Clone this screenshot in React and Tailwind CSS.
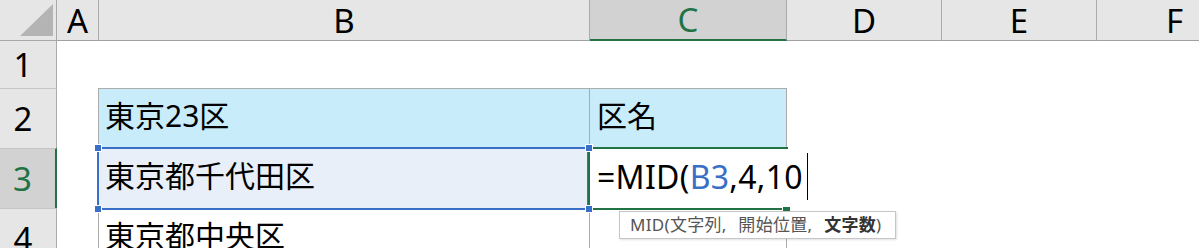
import React from "react";

const cols = [
  { key: "A", w: "w-[42px]" },
  { key: "B", w: "w-[491px]" },
  { key: "C", w: "w-[197px]", active: true },
  { key: "D", w: "w-[155px]" },
  { key: "E", w: "w-[155px]" },
  { key: "F", w: "w-[155px]" },
];

const cellFont = "font-['Noto_Sans','Noto_Sans_CJK_JP',sans-serif]";

function RowHead({ n, active, top = true, h }) {
  return (
    <div
      className={`${h} w-[57px] shrink-0 flex items-center justify-center pr-[10px] text-[33px] leading-none font-['Noto_Sans',sans-serif] ${
        top ? "border-t border-[#c4c4c4]" : ""
      } ${
        active
          ? "bg-[#d2d2d2] text-[#217346] border-r-2 border-r-[#217346]"
          : "bg-[#e6e6e6] text-black border-r border-r-[#ababab]"
      }`}
    >
      {n}
    </div>
  );
}

export default function App() {
  return (
    <div className="relative w-[1199px] h-[248px] overflow-hidden bg-white select-none">
      {/* column header */}
      <div className="flex h-[41px] bg-[#e6e6e6]">
        <div className="w-[57px] shrink-0 border-r border-b border-[#a8a8a8] flex">
          <svg width="56" height="40" viewBox="0 0 56 40">
            <polygon points="20,36 53,36 53,4" fill="#b4b4b4" />
          </svg>
        </div>
        {cols.map((c, i) => (
          <div
            key={c.key}
            className={`${c.w} shrink-0 flex items-center justify-center text-[33px] leading-none font-['Noto_Sans',sans-serif] ${
              i < cols.length - 1 ? "border-r border-r-[#ababab]" : ""
            } ${
              c.active
                ? "bg-[#d2d2d2] text-[#217346] border-b-2 border-b-[#217346]"
                : "text-black border-b border-b-[#a0a0a0]"
            }`}
          >
            {c.key}
          </div>
        ))}
      </div>

      {/* row 1 */}
      <div className="flex h-[47px]">
        <RowHead n="1" top={false} h="h-[47px]" />
        <div className="flex-1" />
      </div>

      {/* row 2 */}
      <div className={`flex h-[60px] ${cellFont}`}>
        <RowHead n="2" h="h-[60px]" />
        <div className="w-[42px] shrink-0 border-r border-[#acacac]" />
        <div className="w-[491px] shrink-0 border-t border-r border-[#acacac] bg-[#c9ecfb] flex items-center pl-[6px] pb-[6px] text-[30px] text-black">
          東京23区
        </div>
        <div className="w-[197px] shrink-0 border-t border-r border-[#acacac] bg-[#c9ecfb] flex items-center pl-[7px] pb-[6px] text-[30px] text-black">
          区名
        </div>
      </div>

      {/* row 3 */}
      <div className={`flex h-[60px] ${cellFont}`}>
        <RowHead n="3" active h="h-[60px]" />
        <div className="w-[42px] shrink-0 border-r border-[#acacac]" />
        <div className="w-[491px] shrink-0 border-t border-r border-[#acacac] bg-[#e8eff9] flex items-center pl-[6px] pb-[6px] text-[30px] text-black">
          東京都千代田区
        </div>
        <div className="w-[197px] shrink-0 border-t border-[#acacac] flex items-center pl-[7px] pb-[4px] text-[32px] tracking-[0.3px] text-black whitespace-nowrap overflow-visible">
          <span className="shrink-0">
            =MID(<span className="text-[#3a6fc8]">B3</span>,4,10
          </span>
          <span className="shrink-0 ml-[4px] inline-block w-px h-[47px] bg-black" />
        </div>
      </div>

      {/* row 4 */}
      <div className={`flex h-[60px] ${cellFont}`}>
        <RowHead n="4" h="h-[60px]" />
        <div className="w-[42px] shrink-0 border-r border-[#acacac]" />
        <div className="w-[491px] shrink-0 border-t border-r border-[#acacac] flex items-center pl-[6px] pb-[6px] text-[30px] text-black">
          東京都中央区
        </div>
        <div className="w-[197px] shrink-0 border-t border-r border-[#acacac]" />
      </div>

      {/* reference range B3 */}
      <div className="absolute left-[97px] top-[147px] w-[492px] h-[63px] border-2 border-[#3a6fc8] pointer-events-none" />
      {/* active cell C3 (edit mode) */}
      <div className="absolute left-[588px] top-[147px] w-[200px] h-[2px] bg-[#217346]" />
      <div className="absolute left-[588px] top-[147px] w-[2px] h-[63px] bg-[#217346]" />
      <div className="absolute left-[588px] top-[208px] w-[194px] h-[2px] bg-[#217346]" />
      <div className="absolute left-[782px] top-[206px] w-[8px] h-[6px] bg-[#217346] border-l border-t border-white" />

      {/* handles */}
      {[
        "left-[94px] top-[144px]",
        "left-[94px] top-[205px]",
        "left-[585px] top-[144px]",
        "left-[585px] top-[205px]",
      ].map((p) => (
        <div key={p} className={`absolute ${p} w-[8px] h-[8px] bg-[#3a6fc8] border border-white`} />
      ))}

      {/* function tooltip */}
      <div className="absolute left-[619px] top-[211px] w-[277px] h-[28px] bg-white border border-[#c6c6c6] shadow-[1px_1px_2px_rgba(0,0,0,0.12)] flex items-center pl-[10px] text-[17px] text-[#555] whitespace-nowrap font-['Noto_Sans','Noto_Sans_CJK_JP',sans-serif]">
        <span className="[word-spacing:7px] tracking-[0.3px]">
          MID(文字列, 開始位置, <span className="font-bold text-[#333]">文字数</span>)
        </span>
      </div>
    </div>
  );
}
